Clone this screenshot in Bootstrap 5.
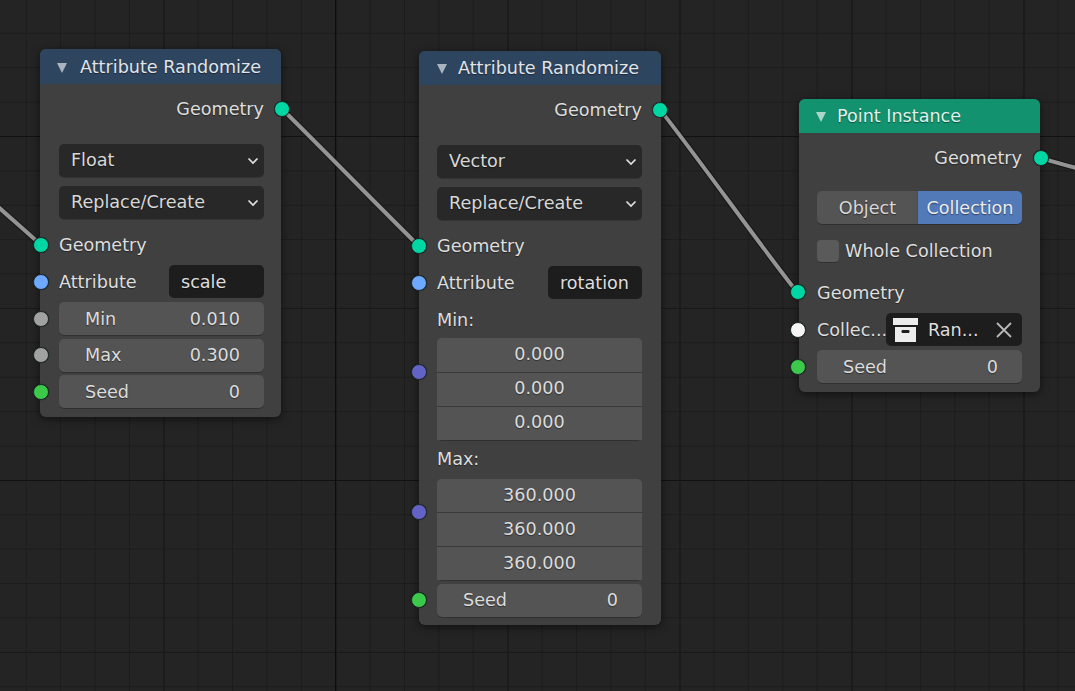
<!DOCTYPE html>
<html lang="en">
<head>
<meta charset="utf-8">
<title>Geometry nodes</title>
<link href="https://cdn.jsdelivr.net/npm/bootstrap@5.3.0/dist/css/bootstrap.min.css" rel="stylesheet">
<style>
html,body{height:100%;margin:0;background:#242424;overflow:hidden}
.nd-canvas{position:relative;width:1075px;height:691px;overflow:hidden;font-family:"DejaVu Sans",sans-serif;font-size:17.6px;line-height:1;color:#dedede;text-shadow:0 1px 1px rgba(0,0,0,.45);
background-color:#242424;
background-image:
linear-gradient(90deg,#0c0c0c 1px,transparent 1px),
linear-gradient(90deg,#191919 1px,transparent 1px),
linear-gradient(#111 1px,transparent 1px),
linear-gradient(#191919 1px,transparent 1px),
linear-gradient(90deg,#1c1c1c 1px,transparent 1px),
linear-gradient(#1c1c1c 1px,transparent 1px);
background-size:1px 100%,172px 100%,100% 344px,100% 172px,34.4px 100%,100% 34.4px;
background-repeat:no-repeat,repeat,repeat,repeat,repeat,repeat;
background-position:335px 0,163.7px 0,0 136px,0 136px,25.7px 0,0 32.8px}
.nd-links{position:absolute;left:0;top:0;width:1075px;height:691px}
.nd-node{position:absolute;background:#404040;border-radius:6px;box-shadow:0 2px 9px rgba(0,0,0,.55);--pl:18px;--pr:18px}
.nd-a{left:40px;top:49px;width:241px;--pl:19px;--pr:17px}
.nd-b{left:419px;top:51px;width:242px;--pr:19px}
.nd-c{left:799px;top:99px;width:241px}
.nd-head{height:35px;padding:2px 0 0 17px;gap:13px;border-radius:6px 6px 0 0;background:#2e4560;color:#e0e4e8}
.nd-b .nd-head{height:34px;padding-left:18px;gap:11px}
.nd-c .nd-head{height:34px;gap:11px;background:#12926f;color:#e0f0ea}
.nd-tri{width:10px;height:10px;flex:none}
.nd-body{padding:8.5px var(--pr) 8.5px var(--pl);gap:3.67px}
.nd-row{position:relative;height:33px;flex:none;padding-top:2px}
.nd-flat{padding-top:0}
.nd-tx{padding-top:2px}
.nd-sock{position:absolute;top:50%;width:16px;height:16px;margin-top:-8px;border-radius:50%;border:1px solid #1c2a28;box-shadow:0 0 1px rgba(0,0,0,.6)}
.nd-in{left:calc(-8px - var(--pl))}
.nd-a .nd-in{left:calc(-7px - var(--pl))}
.nd-c .nd-in{left:calc(-9px - var(--pl))}
.nd-out{right:calc(-9px - var(--pr))}
.nd-b .nd-out{right:calc(-7px - var(--pr))}
.nd-teal{background:#00d6a3}
.nd-blue{background:#6ea8ff}
.nd-gray{background:#a1a1a1}
.nd-green{background:#3cc84a}
.nd-violet{background:#6363c7}
.nd-white{background:#f5f5f5}
.nd-sel{background:#282828;border-radius:5px;padding:0 5px 0 12px;color:#d8d8d8;box-shadow:0 1px 0 rgba(0,0,0,.2)}
.nd-sel svg{width:12px;height:8px;margin-top:2px}
.nd-txt{background:#1d1d1d;border-radius:5px;padding:2px 0 0 12px;width:95px;flex:none}
.nd-b .nd-txt{width:94px}
.nd-num{background:#545454;border-radius:5px;padding:2px 24px 0 26px;box-shadow:0 1px 0 rgba(0,0,0,.25);color:#dcdcdc}
.nd-vec{height:34px;background:#545454;color:#dcdcdc;border-top:1px solid #3a3a3a}
.nd-vec:first-child{border-top:0}
.nd-grp{position:relative;flex:none;border-radius:5px;box-shadow:0 1px 0 rgba(0,0,0,.25);background:#545454}
.nd-grp .nd-vec:first-child{border-radius:5px 5px 0 0}
.nd-grp .nd-vec:last-child{border-radius:0 0 5px 5px}
.nd-grp .nd-sock{top:34px}
.nd-grp-low .nd-sock{top:33px}
.nd-grp-low .nd-vec:first-child{height:33px}
.nd-sp14{margin-top:14.83px}
.nd-sp13{margin-top:13.33px}
.nd-sp5{margin-top:5.33px}
.nd-sp7{margin-top:6.17px}
.nd-sp6{margin-top:6px}
.nd-sp52{margin-top:5.2px}
.nd-sp1{margin-top:.8px}
.nd-m1{margin-top:-1px}
.nd-m2{margin-top:-2px}
.nd-tgl{height:33px;flex:none;border-radius:5px;overflow:hidden;box-shadow:0 1px 0 rgba(0,0,0,.25)}
.nd-tgl .btn{--bs-btn-padding-x:0;--bs-btn-padding-y:0;--bs-btn-font-size:17.6px;--bs-btn-border-width:0;--bs-btn-border-radius:0;--bs-btn-line-height:1;padding-top:2px;font-family:inherit;text-shadow:inherit}
.nd-tgl .nd-off{background:#545454;color:#d8d8d8;flex:0 0 101px}
.nd-tgl .nd-on{background:#5279b8;color:#ececec;border-left:1px solid #33507f;flex:1 1 0}
.nd-chk{width:22px;height:22px;border-radius:4px;background:#5a5a5a;box-shadow:0 1px 0 rgba(0,0,0,.25);flex:none}
.nd-lab{gap:6px}
.nd-coll{background:#1d1d1d;border-radius:5px;width:136px;flex:none;padding-left:7px;padding-right:10px;gap:10px}
.nd-coll .nd-box{width:25px;height:24px;flex:none}
.nd-coll .nd-x{width:16px;height:16px;flex:none}
.nd-clabel{width:69px;flex:none;white-space:nowrap}
</style>
</head>
<body>
<div class="nd-canvas">
  <svg class="nd-links" viewBox="0 0 1075 691" fill="none">
    <g stroke="#151515" stroke-width="6.4" stroke-opacity=".7" stroke-linecap="round">
      <path d="M-20 190C-6 204 27 232 41 245"/>
      <path d="M282 109C298 124 403 231 419 246"/>
      <path d="M660 110C674 125 784 278 798 293"/>
      <path d="M1040 158C1052 161 1066 166 1085 170"/>
    </g>
    <g stroke="#949494" stroke-width="4" stroke-linecap="round">
      <path d="M-20 190C-6 204 27 232 41 245"/>
      <path d="M282 109C298 124 403 231 419 246"/>
      <path d="M660 110C674 125 784 278 798 293"/>
      <path d="M1040 158C1052 161 1066 166 1085 170"/>
    </g>
  </svg>

  <section class="nd-node nd-a d-flex flex-column">
    <div class="nd-head d-flex align-items-center"><svg class="nd-tri" viewBox="0 0 10 10"><path d="M0 0H10L5 10Z" fill="#aab4bf"/></svg><span>Attribute Randomize</span></div>
    <div class="nd-body d-flex flex-column">
      <div class="nd-row d-flex align-items-center justify-content-end">Geometry<i class="nd-sock nd-out nd-teal"></i></div>
      <div class="nd-row nd-sel nd-sp14 d-flex align-items-center justify-content-between"><span>Float</span><svg viewBox="0 0 12 8" fill="none"><path d="M1.5 1.5L6 6L10.5 1.5" stroke="#e0e0e0" stroke-width="1.7"/></svg></div>
      <div class="nd-row nd-sel nd-sp5 d-flex align-items-center justify-content-between"><span>Replace/Create</span><svg viewBox="0 0 12 8" fill="none"><path d="M1.5 1.5L6 6L10.5 1.5" stroke="#e0e0e0" stroke-width="1.7"/></svg></div>
      <div class="nd-row nd-sp7 d-flex align-items-center">Geometry<i class="nd-sock nd-in nd-teal"></i></div>
      <div class="nd-row nd-flat d-flex align-items-center justify-content-between"><span class="nd-tx">Attribute</span><div class="nd-txt h-100 d-flex align-items-center">scale</div><i class="nd-sock nd-in nd-blue"></i></div>
      <div class="nd-row nd-num d-flex align-items-center justify-content-between"><span>Min</span><span>0.010</span><i class="nd-sock nd-in nd-gray"></i></div>
      <div class="nd-row nd-num d-flex align-items-center justify-content-between"><span>Max</span><span>0.300</span><i class="nd-sock nd-in nd-gray"></i></div>
      <div class="nd-row nd-num d-flex align-items-center justify-content-between"><span>Seed</span><span>0</span><i class="nd-sock nd-in nd-green"></i></div>
    </div>
  </section>

  <section class="nd-node nd-b d-flex flex-column">
    <div class="nd-head d-flex align-items-center"><svg class="nd-tri" viewBox="0 0 10 10"><path d="M0 0H10L5 10Z" fill="#aab4bf"/></svg><span>Attribute Randomize</span></div>
    <div class="nd-body d-flex flex-column">
      <div class="nd-row d-flex align-items-center justify-content-end">Geometry<i class="nd-sock nd-out nd-teal"></i></div>
      <div class="nd-row nd-sel nd-sp14 d-flex align-items-center justify-content-between"><span>Vector</span><svg viewBox="0 0 12 8" fill="none"><path d="M1.5 1.5L6 6L10.5 1.5" stroke="#e0e0e0" stroke-width="1.7"/></svg></div>
      <div class="nd-row nd-sel nd-sp5 d-flex align-items-center justify-content-between"><span>Replace/Create</span><svg viewBox="0 0 12 8" fill="none"><path d="M1.5 1.5L6 6L10.5 1.5" stroke="#e0e0e0" stroke-width="1.7"/></svg></div>
      <div class="nd-row nd-sp7 d-flex align-items-center">Geometry<i class="nd-sock nd-in nd-teal"></i></div>
      <div class="nd-row nd-flat d-flex align-items-center justify-content-between"><span class="nd-tx">Attribute</span><div class="nd-txt h-100 d-flex align-items-center">rotation</div><i class="nd-sock nd-in nd-blue"></i></div>
      <div class="nd-row d-flex align-items-center">Min:</div>
      <div class="nd-grp nd-m2">
        <div class="nd-vec d-flex align-items-center justify-content-center">0.000</div>
        <div class="nd-vec d-flex align-items-center justify-content-center">0.000</div>
        <div class="nd-vec d-flex align-items-center justify-content-center">0.000</div>
        <i class="nd-sock nd-in nd-violet"></i>
      </div>
      <div class="nd-row nd-m1 d-flex align-items-center">Max:</div>
      <div class="nd-grp nd-grp-low">
        <div class="nd-vec d-flex align-items-center justify-content-center">360.000</div>
        <div class="nd-vec d-flex align-items-center justify-content-center">360.000</div>
        <div class="nd-vec d-flex align-items-center justify-content-center">360.000</div>
        <i class="nd-sock nd-in nd-violet"></i>
      </div>
      <div class="nd-row nd-num d-flex align-items-center justify-content-between"><span>Seed</span><span>0</span><i class="nd-sock nd-in nd-green"></i></div>
    </div>
  </section>

  <section class="nd-node nd-c d-flex flex-column">
    <div class="nd-head d-flex align-items-center"><svg class="nd-tri" viewBox="0 0 10 10"><path d="M0 0H10L5 10Z" fill="#a9d6c9"/></svg><span>Point Instance</span></div>
    <div class="nd-body d-flex flex-column">
      <div class="nd-row d-flex align-items-center justify-content-end">Geometry<i class="nd-sock nd-out nd-teal"></i></div>
      <div class="btn-group nd-tgl nd-sp13" role="group">
        <button type="button" class="btn nd-off">Object</button>
        <button type="button" class="btn nd-on">Collection</button>
      </div>
      <div class="nd-row nd-flat nd-lab nd-sp6 d-flex align-items-center"><span class="nd-chk"></span><span class="nd-tx">Whole Collection</span></div>
      <div class="nd-row nd-sp52 d-flex align-items-center">Geometry<i class="nd-sock nd-in nd-teal"></i></div>
      <div class="nd-row nd-flat nd-sp1 d-flex align-items-center"><span class="nd-clabel nd-tx">Collec...</span>
        <div class="nd-coll h-100 d-flex align-items-center">
          <svg class="nd-box" viewBox="0 0 25 24"><path fill="#ececec" d="M0 0H25V7H0ZM2 9H23V24H2Z"/><rect x="8.5" y="12" width="8" height="3" rx="1.2" fill="#1d1d1d"/></svg>
          <span class="flex-grow-1 nd-tx">Ran...</span>
          <svg class="nd-x" viewBox="0 0 16 16" fill="none"><path d="M1 1L15 15M15 1L1 15" stroke="#b8b8b8" stroke-width="1.8"/></svg>
        </div>
        <i class="nd-sock nd-in nd-white"></i></div>
      <div class="nd-row nd-num d-flex align-items-center justify-content-between"><span>Seed</span><span>0</span><i class="nd-sock nd-in nd-green"></i></div>
    </div>
  </section>
</div>
<script src="https://cdn.jsdelivr.net/npm/bootstrap@5.3.0/dist/js/bootstrap.bundle.min.js"></script>
</body>
</html>
